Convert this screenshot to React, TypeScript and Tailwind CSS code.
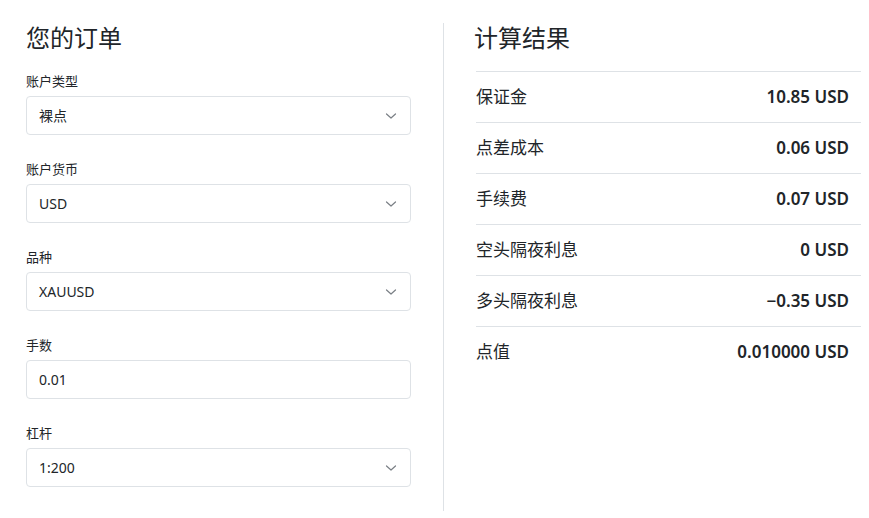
import React from "react";

const font = { fontFamily: '"Noto Sans", "Noto Sans CJK SC", sans-serif' };

function Chevron() {
  return (
    <svg width="12" height="8" viewBox="0 0 12 8" className="absolute right-[13px] top-1/2 -translate-y-1/2">
      <path d="M1.5 2 L6 6 L10.5 2" fill="none" stroke="#7a7f85" strokeWidth="1.2" strokeLinecap="round" strokeLinejoin="round" />
    </svg>
  );
}

function Field({ label, value, select = true }: { label: string; value: string; select?: boolean }) {
  return (
    <div className="mb-[24px]">
      <div className="text-[13px] leading-[20px] text-[#212529] mb-[5px]">{label}</div>
      <div className="relative h-[39px] border border-[#dee2e6] rounded-[4px] bg-white flex items-center pl-[12px] text-[14px] text-[#212529]">
        {value}
        {select && <Chevron />}
      </div>
    </div>
  );
}

const rows = [
  ["保证金", "10.85 USD"],
  ["点差成本", "0.06 USD"],
  ["手续费", "0.07 USD"],
  ["空头隔夜利息", "0 USD"],
  ["多头隔夜利息", "−0.35 USD"],
  ["点值", "0.010000 USD"],
];

export default function App() {
  return (
    <div className="w-[869px] h-[518px] bg-white overflow-hidden" style={font}>
      <div className="flex pt-[23px]">
        <div className="w-[385px] ml-[26px]">
          <h2 className="text-[24px] leading-[30px] text-[#212529] mb-[18px]">您的订单</h2>
          <Field label="账户类型" value="裸点" />
          <Field label="账户货币" value="USD" />
          <Field label="品种" value="XAUUSD" />
          <Field label="手数" value="0.01" select={false} />
          <Field label="杠杆" value="1:200" />
        </div>
        <div className="ml-[32px] w-px bg-[#dee2e6]" />
        <div className="ml-[32px] w-[385px]">
          <h2 className="text-[24px] leading-[30px] text-[#212529] mb-[18px] -ml-[2px]">计算结果</h2>
          <div>
            {rows.map(([k, v]) => (
              <div
                key={k}
                className="flex items-center justify-between h-[51px] border-t border-[#dee2e6] pr-[12px] text-[17px] text-[#212529]"
              >
                <span>{k}</span>
                <span className="font-semibold">{v}</span>
              </div>
            ))}
          </div>
        </div>
      </div>
    </div>
  );
}
